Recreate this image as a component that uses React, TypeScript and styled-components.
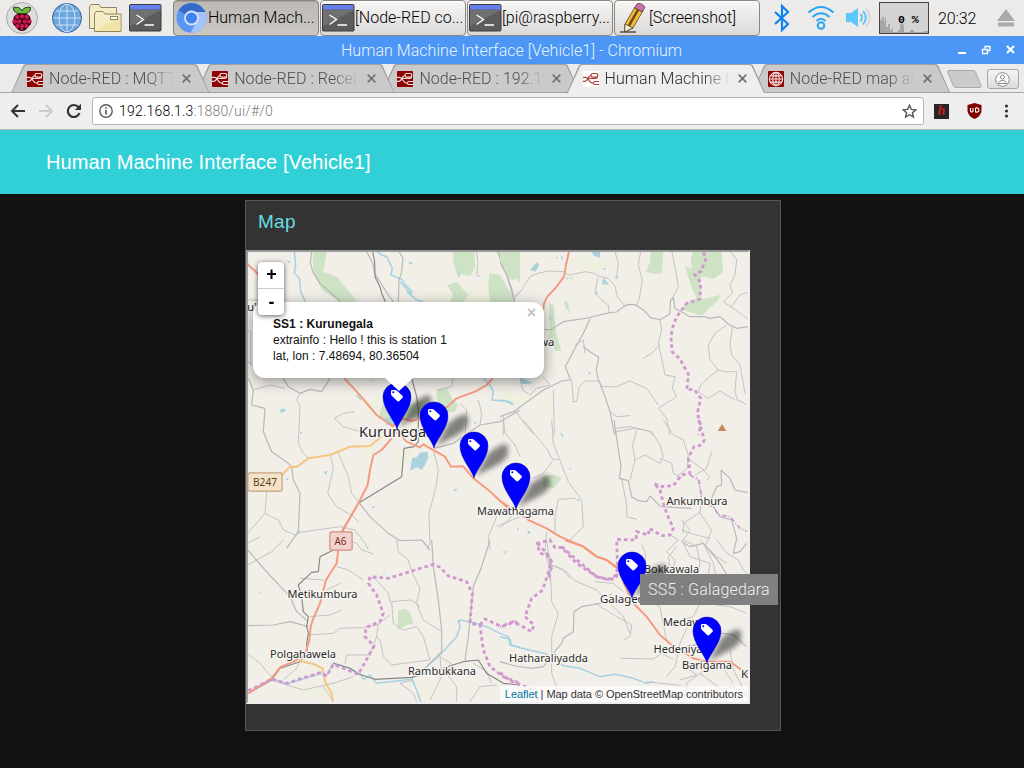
import React from 'react';
import styled, { createGlobalStyle, css } from 'styled-components';

const Global = createGlobalStyle`
  * { box-sizing: border-box; }
  body { margin: 0; background: #111; overflow: hidden; }
`;

const Desktop = styled.div`
  width: 1024px; height: 768px; display: flex; flex-direction: column;
  background: #111; overflow: hidden;
  font-family: Roboto, sans-serif; font-weight: 300; font-size: 16px; color: #000;
`;

/* ---------- desktop panel ---------- */
const Panel = styled.div`
  height: 36px; flex: none; display: flex; align-items: center; background: #edebe9;
`;
const Launchers = styled.div`
  display: flex; align-items: center; gap: 6.5px; width: 173px; padding-left: 5px;
  svg { display: block; }
  svg:first-child { margin-right: 5px; }
`;
const Tasks = styled.div`display: flex; gap: 1px; height: 36px;`;
const Task = styled.div<{ $active?: boolean }>`
  width: 146px; height: 36px; display: flex; align-items: center; padding-left: 1px;
  border: 1px solid #8a8782; border-radius: 4px; white-space: nowrap; line-height: 34px;
  background: ${p => (p.$active ? 'linear-gradient(#bcb9b5,#cbc8c4)' : 'linear-gradient(#f7f6f5,#dcdad8)')};
  box-shadow: inset 0 1px 0 ${p => (p.$active ? '#a9a6a2' : '#fff')};
  svg { flex: none; display: block; }
`;
const Tray = styled.div`
  flex: 1; display: flex; align-items: center; height: 36px;
  svg { display: block; flex: none; }
`;
const BluetoothSlot = styled.div`margin-left: 14px; width: 34px;`;
const WifiSlot = styled.div`width: 37px;`;
const SoundSlot = styled.div`width: 34px;`;
const CpuMeter = styled.div`
  position: relative; width: 50px; height: 32px; border: 1px solid #444; background: #d3d3d3;
  svg { width: 48px; height: 30px; }
`;
const CpuText = styled.span`
  position: absolute; left: 18px; top: 10px; font: bold 11.5px/14px "Liberation Mono", monospace; white-space: pre;
`;
const Clock = styled.div`width: 68px; padding-left: 9px; letter-spacing: -0.1px;`;

/* ---------- browser window ---------- */
const TitleBar = styled.div`
  height: 28px; flex: none; background: #4c97f5; color: #e9f3ff; display: flex; align-items: center;
  padding-right: 9px;
`;
const WindowTitle = styled.div`flex: 1; padding-left: 341px; line-height: 29px; white-space: nowrap; letter-spacing: .04px;`;
const TabStrip = styled.div`
  height: 29px; flex: none; display: flex; align-items: flex-end; background: #ebebeb; padding-left: 11px;
  border-bottom: 1px solid #a9a9a9;
`;
const tabShape = 'polygon(0 100%, 12.5px 1px, 14.5px 0, calc(100% - 14.5px) 0, calc(100% - 12.5px) 1px, 100% 100%)';
const Tab = styled.div<{ $active?: boolean; $z: number }>`
  position: relative; z-index: ${p => (p.$active ? 9 : p.$z)};
  width: 198.6px; height: 29px; flex: none; margin-right: -13.4px; margin-bottom: -1px;
  display: flex; align-items: center; padding: 0 18px 0 16px; color: ${p => (p.$active ? '#2d2d2d' : '#4c4c4c')};
  &::before, &::after { content: ''; position: absolute; inset: 0; clip-path: ${tabShape}; z-index: -2; background: #a0a0a0; }
  &::after { z-index: -1; ${p => p.$active ? css`inset: 1px 1.2px 0; background: #eeeeee;` : css`inset: 1px 1.2px 1px; background: #cacaca;`} }
  svg { display: block; flex: none; }
`;
const TabTitle = styled.div`
  width: 126px; margin-left: 6px; overflow: hidden; white-space: nowrap; line-height: 28px; letter-spacing: .05px;
  mask-image: linear-gradient(90deg, #000 78%, transparent 99%);
`;
const TabClose = styled.span`margin-left: 7px; display: flex; color: #727272;`;
const NewTab = styled.div`
  width: 35px; height: 18px; margin: 0 5px 4px 9.5px; position: relative; flex: none; z-index: 1;
  svg { display: block; }
`;
const UserButton = styled.div`
  width: 32px; height: 20px; margin-bottom: 3px; border: 1px solid #a5a5a5; border-radius: 3px;
  background: linear-gradient(#f4f4f4,#dcdcdc); display: flex; align-items: center; justify-content: center;
`;
const Toolbar = styled.div`
  height: 37px; flex: none; display: flex; align-items: center; background: #eeeeee; border-bottom: 1px solid #b9b9b9;
  padding-left: 10px;
  svg { display: block; flex: none; }
`;
const NavButtons = styled.div`display: flex; flex: none; gap: 12px; width: 82px;`;
const Omnibox = styled.div`
  width: 832px; height: 28px; flex: none; background: #fff; border: 1px solid #b4b4b4; border-radius: 3px;
  display: flex; align-items: center; padding: 0 6px; font-size: 14px; letter-spacing: .15px;
`;
const Address = styled.div`flex: 1; padding-left: 6px; color: #7c7c7c; b { font-weight: 300; color: #000; letter-spacing: .22px; }`;
const Extensions = styled.div`display: flex; flex: none; align-items: center; padding-left: 10px;`;
const HExt = styled.div`
  width: 15px; height: 15px; background: #262626; color: #c51e1e; text-align: center;
  font: italic bold 14px/14px "Liberation Serif", serif; margin-right: 18px;
`;

/* ---------- dashboard ---------- */
const Header = styled.div`
  height: 64px; flex: none; background: #31d0d6; color: #fff; padding-left: 46px;
  font: 400 20px/64px "Liberation Sans", sans-serif; letter-spacing: .1px;
`;
const Content = styled.div`flex: 1; background: #111; padding: 6px 0 0 245px;`;
const Card = styled.div`
  width: 536px; height: 531px; background: #333; border: 1px solid #555; display: flex; flex-direction: column;
`;
const CardTitle = styled.div`
  height: 49px; padding: 9px 12px 0; color: #66dde2;
  font: 400 19px/24px "Liberation Sans", sans-serif; letter-spacing: .25px;
`;
const MapFrame = styled.div`
  position: relative; width: 504px; height: 454px; border: 2px solid; border-color: #9a9a9a #eee #eee #9a9a9a;
  background: #f2efe9;
`;
const Viewport = styled.div`position: relative; width: 500px; height: 450px; overflow: hidden; > svg { display: block; }`;
const Popup = styled.div`
  position: absolute; left: 5px; top: 50px; width: 291px; height: 76px; background: #fff; border-radius: 12px;
  box-shadow: 0 3px 14px rgba(0,0,0,.42); padding: 14px 20px; color: #111;
  font: 400 12px/16px "Liberation Sans", sans-serif; letter-spacing: .03px;
`;
const PopupTail = styled.div`
  position: absolute; left: 132px; top: 76px; width: 28px; height: 13px; background: #fff;
  clip-path: polygon(0 0, 100% 0, 50% 100%);
`;
const PopupClose = styled.span`
  position: absolute; right: 8px; top: 3px; color: #c3c3c3; font: bold 16px/16px "Liberation Sans", sans-serif;
`;
const ZoomControl = styled.div`
  position: absolute; left: 10px; top: 10px; width: 26px; border-radius: 4px; overflow: hidden;
  background: #fff; filter: drop-shadow(0 1px 2.5px rgba(0,0,0,.65));
`;
const ZoomButton = styled.div`
  height: 26px; text-align: center; font: bold 18px/24px "Liberation Sans", sans-serif; padding-left: 1px;
  & + & { height: 27px; border-top: 1px solid #ccc; line-height: 26px; }
`;
const Attribution = styled.div`
  position: absolute; right: 0; bottom: 0; height: 16px; padding: 0 5px; background: rgba(255,255,255,.7); color: #333;
  font: 400 11px/16px "Liberation Sans", sans-serif; white-space: nowrap; letter-spacing: -.045px;
  span { color: #0078a8; }
`;
const Tooltip = styled.div`
  position: absolute; left: 392px; top: 322px; width: 138px; height: 31px; background: #808080; color: #f0f0f0;
  padding-left: 8px; font: 300 16px/31px Roboto, sans-serif; white-space: nowrap; letter-spacing: .17px;
`;

/* ---------- icons ---------- */
const berries = [[12.2, 16], [21.8, 16], [17, 15.5], [9.8, 20.5], [24.2, 20.5], [14.2, 20.5], [19.8, 20.5], [12.5, 25], [21.5, 25], [17, 25], [17, 28]];
const RaspberryIcon = () => (
  <svg width="34" height="34" viewBox="0 0 34 34">
    <circle cx="17" cy="17" r="15.5" fill="#dedddd" stroke="#a9a9a9" />
    <path d="M17 13C11 13 8 10 8.500 6.500C13 5.500 16 7.500 17 10C18 7.500 21 5.500 25.500 6.500C26 10 23 13 17 13Z" fill="#6cbb3c" stroke="#20350e" strokeWidth="1" />
    <path d="M17 12.500C11 12 8.500 15 8.500 18C6.500 21 8 24 10.500 25.500C12 28.500 15 30 17 30C19 30 22 28.500 23.500 25.500C26 24 27.500 21 25.500 18C25.500 15 23 12 17 12.500Z" fill="#2a0510" />
    {berries.map(([x, y], i) => <circle key={i} cx={x} cy={y} r={i > 9 ? 1.4 : 2.2} fill="#c9164c" />)}
  </svg>
);
const GlobeIcon = () => (
  <svg width="32" height="34" viewBox="0 0 32 34" fill="none" stroke="#c9e2fa">
    <circle cx="16" cy="17" r="14.500" fill="#6da5dd" stroke="#32639b" />
    <path d="M16 3V31M2 17H30M4.500 10H27.500M4.500 24H27.500" />
    <ellipse cx="16" cy="17" rx="8" ry="14" />
  </svg>
);
const FolderIcon = () => (
  <svg width="33" height="34" viewBox="0 0 33 34" fill="#f5ebc4" stroke="#8f8560">
    <path d="M.5 27.500V6L2 3.500H10L12 6.500H27.500V27.500Z" /><path d="M5.500 30.500V13L7 10.500H14L16 13H32V30.500Z" />
    <path d="M6 30L31.500 14V30Z" fill="#f1e09e" stroke="none" opacity=".7" />
    <rect x="21.500" y="15.500" width="7" height="3" fill="#fff" />
  </svg>
);
const TerminalIcon = () => (
  <svg width="33" height="28" viewBox="0 0 33 28">
    <rect x=".5" y=".5" width="31.500" height="26.500" rx="1" fill="#5c5c5c" stroke="#3b3b3b" />
    <path d="M1 6H32L1 22Z" fill="#707070" /><rect x="1" y="1" width="30.500" height="4.500" fill="#647fee" />
    <path d="M7.500 11L14.500 15.500L7.500 20.500M15.500 21H25" fill="none" stroke="#fff" strokeWidth="1.400" />
  </svg>
);
const ChromiumIcon = () => (
  <svg width="33" height="32" viewBox="0 0 32 32">
    <circle cx="16" cy="16" r="15" fill="#5a95f2" />
    <path d="M16 16L3 8.500A15 15 0 0 1 29 8.500L30 10H16Z" fill="#356ac9" />
    <path d="M16 10H29.800A15 15 0 0 1 15 31L21 20Z" fill="#a4c3fb" />
    <circle cx="16" cy="16" r="7.500" fill="#d7e6ff" /><circle cx="16" cy="16" r="5.600" fill="#3f84ed" />
  </svg>
);
const PencilIcon = () => (
  <svg width="33" height="32" viewBox="0 0 33 32" stroke="#3b301c" strokeWidth=".7">
    <path d="M4 30H20" strokeWidth="1.200" />
    <path d="M9 22L19 5L26.500 9.500L17 26L8.500 30Z" fill="#f2b836" /><path d="M13 23.500L22.500 7" stroke="#684713" strokeWidth="2.500" />
    <path d="M9 22L17 26L8.500 30Z" fill="#f5ead2" /><path d="M18.500 6L21 2Q25 0 29 5L26.500 9.800Z" fill="#ce70a8" />
  </svg>
);
const BluetoothIcon = () => (
  <svg width="16" height="28" viewBox="0 0 16 28" fill="none" stroke="#0a84f0" strokeWidth="2.200"><path d="M1 8L14 20L8 26V2L14 8L1 20" /></svg>
);
const WifiIcon = () => (
  <svg width="27" height="26" viewBox="0 0 27 26" fill="none" stroke="#26a7f3" strokeWidth="2">
    <path d="M.5 7.500Q13-3.500 25.500 7.500M4.500 12Q13 4.500 21.500 12M8.500 16Q13 11.500 17.500 16" /><circle cx="13" cy="20.500" r="3.300" />
  </svg>
);
const SpeakerIcon = () => (
  <svg width="27" height="22" viewBox="0 0 27 22" fill="none">
    <path d="M1 6H6L13 1V20L6 15H1Z" fill="#5cc7fa" />
    <path d="M15.500 7Q18.500 10.500 15.500 14.500M18 4Q23.500 10.500 18 17.500" stroke="#5cc7fa" strokeWidth="2" />
    <path d="M21 1.500Q28.500 10.500 21 20" stroke="#d5d8da" strokeWidth="2" />
  </svg>
);
const NodeRedIcon = ({ light, globe }: { light?: boolean; globe?: boolean }) => {
  const c = light ? '#b13b38' : '#f3dede';
  return (
    <svg width="16" height="16" viewBox="0 0 16 16" fill="none" stroke={c} strokeWidth="1.200">
      <rect width="16" height="16" rx="1" fill={light ? '#fff' : '#8f0000'} stroke="none" />
      {globe
        ? <><circle cx="8" cy="8" r="6.600" /><ellipse cx="8" cy="8" rx="3.200" ry="6.600" /><path d="M8 1.500V14.500M1.500 8H14.500M2.500 4.800H13.500M2.500 11.200H13.500" /></>
        : <><path d="M0 6.300H2.500Q4 6.300 5 8Q7.500 12.300 10.500 12.300M0 10.300H2C5 10.300 5 4.500 8 4.500M5 7.500H12.500Q14 7.500 14.500 6" /><rect x="8" y="2.500" width="6.800" height="3.600" rx="1.600" /><path d="M16 10.500H11.800Q10.500 10.500 10.500 12T11.800 13.500H16" /></>}
    </svg>
  );
};
const CrossIcon = () => <svg width="9" height="9" viewBox="0 0 9 9" stroke="currentColor" strokeWidth="1.700"><path d="M.7.7L8.300 8.300M8.300.7L.7 8.300" /></svg>;

/* ---------- map drawing: each sheet is surveyed at three units per pixel ---------- */
const Sheet = ({ x, y, children }: { x: number; y: number; children: React.ReactNode }) => (
  <g transform={`translate(${x} ${y}) scale(.33333)`}>{children}</g>
);
const S: Record<string, React.SVGProps<SVGPathElement>> = {
  wood: { fill: '#cde3c4', stroke: 'none' },
  farm: { fill: '#eff0dc', stroke: 'none', opacity: 0.75 },
  lake: { fill: '#a9d3df', stroke: 'none' },
  river: { stroke: '#a5d2e2', strokeWidth: 4.5 },
  road: { stroke: '#b9b9b9', strokeWidth: 3.6 },
  lane: { stroke: '#c0c0be', strokeWidth: 2.8 },
  rail: { stroke: '#868686', strokeWidth: 3.4 },
  trunk: { stroke: '#f59b80', strokeWidth: 6 },
  second: { stroke: '#f5c581', strokeWidth: 6 },
  border: { stroke: '#d197cf', strokeWidth: 8.5, strokeDasharray: '11 9', strokeLinejoin: 'miter' },
};
const P = ({ k, d }: { k: string; d: string }) => <path {...S[k]} d={d} />;

const Terrain = () => (
  <g fill="none" strokeLinejoin="round" strokeLinecap="butt">
    <Sheet x={240} y={195}>
      <P k="farm" d="M555 290L600 280L650 305L690 280L740 260L755 320H560ZM465 220L500 225L505 245L475 238ZM700 190L715 210L710 245L700 235Z" />
      <P k="wood" d="M218 171H260L250 230L290 245L352 320H300L245 285L220 230ZM640 171H702L706 215L690 243L650 235L640 200ZM622 270L650 262L686 300L670 321H630L640 300ZM748 235L780 240L815 300L808 321H750L745 275ZM766 171H840V262L818 240L815 205L780 185Z" />
      <P k="lake" d="M505 200L520 203L510 210ZM648 222L662 243L655 245ZM140 195L155 200L145 204Z" />
      <P k="river" d="M163 171L167 210L163 235L178 250L182 290L196 320M405 165L425 180L440 185L457 220L453 240L485 253L496 270L516 289L513 296L480 260M500 290L530 315L550 320" />
      <P k="road" d="M215 171L211 200L218 230L240 265L280 300L300 320M381 171L398 205L404 235L445 300L460 320M478 171L489 190L484 235L477 255L475 320M775 171L785 210L800 240L815 290L824 320" />
      <P k="rail" d="M398 171L404 200L405 245L420 275L425 295L436 320" />
      <P k="lane" d="M709 171L714 200L710 240L722 246M815 310L840 290" />
      <P k="trunk" d="M22 207L60 242" />
      <P k="lane" d="M23 315H60M24 408L32 410V510M23 500L55 520" />
    </Sheet>
    <Sheet x={500} y={245}>
      <P k="farm" d="M55 20L95 38L80 45ZM85 55L118 70L105 80ZM200 45L240 30L330 60L285 80L240 75ZM220 105L245 110L230 130ZM285 105L300 125L285 145ZM0 430L60 450L90 455L60 485L40 470L0 475ZM115 455L160 470L155 490L120 475Z" />
      <P k="wood" d="M0 20H55L54 90L45 104L27 103L0 50ZM0 115L35 150L40 171H0ZM452 20H490L486 85L465 87L438 80L450 50ZM580 20H665L669 82L640 101L605 94L600 120L604 162L630 158L661 149L655 165L605 212L550 195L550 180L590 160L572 120L555 63L575 70L572 40ZM147 174L160 180L168 260L184 317L168 318L144 285L150 240ZM192 165L203 170L210 202L197 190Z" />
      <P k="lake" d="M90 75L110 51L118 60L106 80ZM274 20H300V38L282 32ZM311 98L328 120L305 117ZM341 95H356L350 103ZM60 395L100 415L65 418ZM146 212L156 218L150 230ZM168 33L174 40L168 42ZM212 95L217 100L212 104ZM200 97H205V103H200ZM288 140H293V148H288ZM310 68L320 70L312 76ZM184 32H188V45H184ZM265 382H271V388H265ZM180 565H188L185 572Z" />
      <P k="river" d="M0 465L28 470L40 480" />
      <P k="trunk" d="M207 20L198 60L192 95L170 125L142 155L132 175L130 195" />
      <P k="road" d="M0 50L20 90L35 130L44 171M133 253L150 255L190 230L270 218L285 213L330 203L350 201L372 184L385 178L406 179L430 195L452 218L480 224L509 208L512 165L520 158L525 190L570 215L612 215L630 220L660 215L685 237L710 250L743 245M270 222L250 265L225 310L196 365L212 405L185 408L130 435L40 500L0 515M295 405L310 440L330 500L344 570M250 305L270 320L296 337L289 375L295 405L306 426" />
      <P k="lane" d="M44 160L65 135L90 95L120 83L150 78L190 80L208 90L255 80L282 85L300 95L325 100L345 123L352 155L372 180M345 20L355 55L350 95M422 20L415 60L427 105L418 160L410 180M515 20L525 65L535 125L515 165M293 100L285 145L305 165L325 180L327 202M692 20L710 45L705 90L690 120L697 145L670 170L692 185L715 200L743 222M692 188L720 150L743 142M480 224L485 255L475 295L484 335L495 390L525 395L517 430L530 455L475 490L500 520L510 570M480 300L455 325L430 340M680 240L645 265L625 300L630 345L655 375L675 380L710 380L705 440L712 465L740 478M655 375L605 415L595 440L625 460L660 438L705 465M697 245L690 300L695 330L720 360L735 445M225 300L250 285L255 325M215 405L220 470L230 470L238 425L255 408L295 408M300 425L350 425L390 408L440 430L475 480M330 500L350 515L390 512M345 550L390 545L445 558L460 570M160 435L163 570M45 495L80 545L105 570M10 510V570M60 400L68 435L90 450L110 430L150 420L130 395" />
      <P k="border" d="M610 22L618 40L604 78L584 88L602 113L600 162L560 175L530 215L517 250L513 275L516 320L540 342L566 390L560 434L583 434L602 460L592 505L602 540L596 570" />
      <path d="M653 558L666 537L679 558Z" fill="#cb8858" />
    </Sheet>
    <Sheet x={240} y={370}>
      <P k="farm" d="M370 100L430 70L430 120L390 140ZM470 235L520 240L510 270L480 290L455 265ZM370 225L420 230L370 270ZM340 60L380 90L360 100Z" />
      <P k="wood" d="M590 60L620 53L638 88L654 103L645 125L625 128L590 90ZM430 95L455 155L415 145ZM500 110L550 90L535 145L500 145Z" />
      <P k="lake" d="M517 263L530 262L540 248L563 245L565 262L555 285L545 300L530 292L510 302ZM118 121L128 115L140 120L125 130ZM435 145L455 140L470 165H440ZM700 157L710 155L708 165ZM250 305L263 303L258 315ZM180 185H186V190H180ZM136 326L148 324L142 332ZM642 356H650V362H642ZM170 482H179V488H170ZM397 409H403V414H397ZM396 31L403 33L397 37Z" />
      <P k="river" d="M730 25L750 45L760 65L756 90L795 93L820 103M350 75L365 90" />
      <P k="road" d="M25 25L40 60L35 105L75 115L70 185L95 245L145 280L155 290M270 25L245 65L210 58L180 70L145 50L130 25M582 235L640 220L720 165L780 155L840 120M155 290L160 330L180 370L175 485L140 535M355 395L390 440L445 490L480 512L545 510L570 540" />
      <P k="lane" d="M38 60L90 45L135 55M180 70L170 90L180 110L175 220L190 250L205 265M345 125L310 130L283 145L310 170L380 190L420 205M270 250L280 295L263 370L290 410L340 440L355 455M295 250L325 320L335 370L355 395M580 240L595 300L588 350L567 430L570 520L560 540M715 90L725 130L720 165M640 20L635 50L590 60M790 145L795 190L825 225L840 260M23 490L75 430L80 370L90 330M75 430L115 450L130 480L165 495L180 487L300 470L345 480L375 520L385 540M23 520L60 500M660 100L680 120L675 200M770 440L745 500L750 540M770 470L840 440" />
      <P k="rail" d="M515 25L530 80L535 120L535 215L522 230L492 235L485 320L355 400L305 490" />
      <P k="second" d="M122 318L150 290L170 291L205 265L270 255L300 243L330 230L390 228L425 200" />
      <P k="trunk" d="M313 25L355 70L410 135L460 170M455 205L425 240L400 255L390 300L383 345L355 400L305 485M470 185L500 215L540 232L550 223L615 260L633 290L670 289L700 325L745 360L800 410L840 425M455 170L490 145L515 153L540 145L620 112L650 85L705 65L740 45L758 25" />
    </Sheet>
    <Sheet x={500} y={420}>
      <P k="wood" d="M127 170L160 163L185 175L160 205L130 200ZM10 392L20 398L12 405Z" />
      <P k="lake" d="M182 37L192 52L186 50ZM230 238H240L235 246ZM207 143L215 147L210 150ZM83 333H90V341H83ZM51 325H56V331H51Z" />
      <P k="trunk" d="M0 243L30 262L50 273L85 300L140 325L180 350L250 380L290 410L320 420L345 440L358 445" />
      <P k="road" d="M342 0L350 55L363 140L358 175L385 182L395 230L415 242L440 245L450 228L482 260L575 265" />
      <P k="lane" d="M155 0L160 70L185 135L205 185L245 240L250 320L210 360M70 0L110 50L140 85L155 115L175 120M100 175L130 160L160 120M226 235L175 238L165 290V335M365 175L380 255L380 290L410 298M0 325L40 285M348 35L405 25L455 35L480 75L490 110L480 130L435 105L405 120L390 180M405 120L398 75L410 30M480 115L515 130L520 160L545 173M490 0L520 45L550 60L565 105L562 145L530 170M585 165L620 145L635 95M570 120L605 145L630 172L620 180M590 170L605 220L600 280L635 330L615 380L640 430L650 480M140 335L135 395L145 430L150 480M145 435L185 445L210 475M425 375L435 395L440 480M510 345L535 360L500 395L525 420L515 480M545 300L570 330L550 360L590 380L600 430L590 480M545 330L570 340L630 355M603 275L550 310L550 340" />
      <P k="road" d="M663 150L665 195L650 200L630 245L660 290L695 300L710 355L700 400L720 395L740 370M663 150L690 175L705 210L743 218M545 365L570 380L610 370L640 405L660 430L690 480" />
      <P k="border" d="M596 0L603 25L613 60L604 75L582 80L565 115L570 160L545 165L520 197L480 200L462 190L480 210L490 250L500 280L520 325L510 345L485 347L448 325L445 345L410 335L408 360L350 358L352 430L350 465L325 478L290 470L230 430L185 382L165 383L150 360L112 370L118 398L145 410L155 440L145 480" />
      <path {...S.border} strokeWidth="5" strokeDasharray="14 6 3 6" d="M570 165L598 183L605 245L640 260L655 285L690 290L720 325L740 334" />
    </Sheet>
    <Sheet x={240} y={540}>
      <P k="wood" d="M475 210L495 207L510 215L520 250L495 257L473 270ZM785 32H800V40Z" />
      <P k="farm" d="M195 450L260 440L270 470H190ZM530 450L580 455L570 475L530 470Z" />
      <P k="lake" d="M423 105L437 99L435 103ZM58 155H63V165Z" />
      <P k="river" d="M655 250L660 240L700 248L740 260L780 280L805 290L810 315L840 322M655 240L660 260L650 290L600 345L560 380L515 415M515 415L530 450L542 485M95 415L140 432L210 410L245 400L260 405L280 370L330 385L365 405L370 420L390 405L410 430L515 418" />
      <P k="road" d="M23 30L75 90L150 170L170 215L205 245M575 0L580 80L595 180L605 270L605 335L560 380M750 0L725 80L700 140L690 240L685 290L675 360M25 257L100 255L150 245L205 260" />
      <P k="lane" d="M23 75L95 35L130 0M470 0L475 35L505 60L515 95L540 145L530 190L550 240L605 275M385 115L405 115L445 160L450 185L515 180L540 200M205 285L280 280L300 265L370 263L410 255L450 225M455 185L460 250L490 270L530 260L550 290L570 360L455 375L430 350L420 300L410 290M180 115L250 120M290 80L325 90L370 120M315 0L350 10L365 30L400 42M260 150L300 130M210 230L270 225L305 210M23 340L65 375L80 395L110 425L190 450L280 430L340 410M280 485L250 440M315 370L320 345L390 345L410 290L415 250M130 420L170 385L180 360M520 420L480 430L520 460L530 485M640 375L600 350L605 410L570 480M620 400L650 440L650 485M690 485L720 440L770 435M700 370L740 395L755 430" />
      <P k="rail" d="M280 30L240 50L235 95L215 97L175 135L185 170L190 215L205 230L200 260L205 280L200 310L202 335L180 365L120 385L95 420L25 460M280 370L330 385L355 402L405 418L515 412L560 400L670 365L715 360L740 400L790 430L840 435" />
      <P k="trunk" d="M295 28L290 70L258 120L240 190L220 235L212 260L208 300L195 345L170 360L120 382L95 415L25 460" />
      <P k="second" d="M180 362L220 372L248 385L255 425L275 460L279 485" />
      <P k="border" d="M25 452L95 418L140 430L240 398L260 408L280 373L355 403L375 367L402 318L375 290L378 262L420 245L430 220L410 165L385 130L390 110L445 115L525 90L580 73L600 82L625 108L680 125L697 160L690 250L720 255L730 330L750 380L790 410L840 430M720 255L735 237L785 260L825 245L840 255" />
    </Sheet>
    <Sheet x={500} y={540}>
      <P k="river" d="M0 290L30 297L35 315L60 323L140 342L155 355L190 377L240 385L300 410L345 403L400 415L440 430L460 425" />
      <P k="road" d="M0 365L45 378L95 385L130 380L155 345L185 310L190 295L220 275L222 215L245 200L300 190L335 160M545 325L600 310L635 275L700 285L740 320" />
      <P k="lane" d="M140 0L150 75L155 185L175 220L155 290L155 400L185 485M155 75L200 95L220 120L290 150L370 230L390 280M285 190L350 230L395 255L390 290L370 300M285 125L340 130L370 155M430 160L445 180L480 200L495 280L500 300M530 20L505 50L515 100M545 0L570 50L630 70L625 100M545 140L570 150L600 190L580 230L545 240M650 0L680 40L715 60L730 90L743 100M600 0L650 50L680 70M650 195L690 200L740 220M362 355L460 357L485 340L520 358M500 410L525 380L540 310L560 265M555 485L560 430L600 400L640 430L680 460M440 425L530 435L620 460L700 440L743 470M600 400L620 380L670 385L700 430M540 420L590 405L570 390L630 385M0 400L40 425M690 330L700 390L743 470" />
      <P k="trunk" d="M195 0L250 20L290 50L320 60L353 83M370 125L385 160L405 195L440 230L480 285L515 315L580 355L620 365L690 365L725 390L745 405" />
      <P k="border" d="M112 10L145 45L155 65L128 150L95 175L75 230L102 255L95 275L40 245L0 260M0 398L30 422L90 445L115 480M185 20L225 55L290 110L330 120L350 110L355 80" />
    </Sheet>
  </g>
);

const places: [string, number, number, number, number][] = [
  ['Kurunegala', 359, 436.5, 14, 79], ['Mawathagama', 477, 514.5, 11.5, 77], ['Ankumbura', 666.5, 505, 11.5, 61],
  ['Bokkawala', 644, 572.5, 11.5, 55], ['Metikumbura', 287.5, 598, 11.5, 70], ['Polgahawela', 270, 658, 11.5, 66],
  ['Rambukkana', 408, 675, 11.5, 68], ['Hatharaliyadda', 509, 662, 11.5, 79], ['Galagedara', 600, 603, 11.5, 62],
  ['Medawala', 663, 626, 11.5, 53], ['Hedeniya', 653.5, 652.5, 11.5, 49], ['Barigama', 682, 669, 11.5, 50],
];
const Labels = () => (
  <g fontFamily="'Noto Sans', sans-serif" fontSize="11.5" fontWeight="400" fill="#2b2b2b" stroke="#f8f6f2" strokeWidth="2.500" paintOrder="stroke" strokeLinejoin="round">
    {places.map(([t, x, y, s, w]) => <text key={t} x={x} y={y} fontSize={s} textLength={w} lengthAdjust="spacingAndGlyphs">{t}</text>)}
    <text x="741" y="678">Kandy</text><text x="247" y="311">u'</text><text x="539" y="346">wa</text>
    <g stroke="none">
      <rect x="248.500" y="473.500" width="33" height="17" rx="1.500" fill="#f4e2cb" stroke="#caa377" />
      <text x="253" y="486" fontSize="11" textLength="24" lengthAdjust="spacingAndGlyphs" fill="#604417">B247</text>
      <rect x="330.500" y="532.500" width="21" height="17" rx="1.500" fill="#f2d2cc" stroke="#d18f81" />
      <text x="334.500" y="545" fontSize="11" textLength="12" lengthAdjust="spacingAndGlyphs" fill="#7b2918">A6</text>
    </g>
  </g>
);

const pins = [[397, 429], [434, 448], [474, 478], [516, 509], [632, 598], [707, 663]];
const Pins = () => (
  <g>
    {pins.map(([x, y]) => (
      <path key={x} transform={`translate(${x} ${y})`} d="M2-2L14-24Q24-33 32-34Q36-29 33-21Q27-14 17-10Z" fill="#000" opacity=".46" filter="url(#soft)" />
    ))}
    {pins.map(([x, y]) => (
      <g key={x} transform={`translate(${x} ${y})`}>
        <path d="M0 0C-2-8-14-20-14-32A14 14 0 0 1 14-32C14-20 2-8 0 0Z" fill="#00f" stroke="#0000a8" strokeWidth=".5" />
        <path transform="translate(-6 -39)" fillRule="evenodd" fill="#fff" d="M0 1.200Q0 0 1.200 0H4.200Q5.200 0 6 .7L11.500 5.800Q12.400 6.800 11.500 7.700L8 11.200Q7.100 12 6.200 11.100L.8 5.700Q0 5 0 4ZM2.300 1.300A1 1 0 1 0 2.300 3.300A1 1 0 1 0 2.300 1.300Z" />
      </g>
    ))}
  </g>
);

const tabs = ['Node-RED : MQTT B', 'Node-RED : Receive', 'Node-RED : 192.168', 'Human Machine Int', 'Node-RED map and'];

export default function App() {
  return (
    <Desktop>
      <Global />
      <Panel>
        <Launchers><RaspberryIcon /><GlobeIcon /><FolderIcon /><TerminalIcon /></Launchers>
        <Tasks>
          <Task $active><ChromiumIcon />Human Mach...</Task>
          <Task><TerminalIcon />[Node-RED co...</Task>
          <Task><TerminalIcon />[pi@raspberry...</Task>
          <Task><PencilIcon />[Screenshot]</Task>
        </Tasks>
        <Tray>
          <BluetoothSlot><BluetoothIcon /></BluetoothSlot>
          <WifiSlot><WifiIcon /></WifiSlot>
          <SoundSlot><SpeakerIcon /></SoundSlot>
          <CpuMeter>
            <svg viewBox="0 0 48 30" fill="#a6a6a6"><path d="M0 30V16L2 18V14H4V20L6 13V24H8V21H10V28L13 25V29H18V27H20V22L22 19L24 23V29H30V27H34V29H44V28H48V30Z" /></svg>
            <CpuText>0 %</CpuText>
          </CpuMeter>
          <Clock>20:32</Clock>
          <svg width="18" height="18" viewBox="0 0 18 18" fill="#aaa"><path d="M9 0L18 12H0ZM1 13.500H17V17.500H1Z" /></svg>
        </Tray>
      </Panel>
      <TitleBar>
        <WindowTitle>Human Machine Interface [Vehicle1] - Chromium</WindowTitle>
        <svg width="58" height="10" viewBox="0 0 58 10" fill="none" stroke="#fff" strokeWidth="2">
          <path d="M1 8H9M50 1L57 8M57 1L50 8" /><path d="M28 3.500V1.500H33V5.500H31M25.500 4.500H30.500V8.500H25.500Z" strokeWidth="1.300" />
        </svg>
      </TitleBar>
      <TabStrip>
        {tabs.map((t, i) => (
          <Tab key={t} $active={i === 3} $z={6 - i}>
            <NodeRedIcon light={i === 3} globe={i === 4} /><TabTitle>{t}</TabTitle><TabClose><CrossIcon /></TabClose>
          </Tab>
        ))}
        <NewTab><svg width="35" height="18" viewBox="0 0 35 18"><path d="M2 .5H26Q28 .5 29 3L34 16Q34 17.500 33 17.500H9Q7 17.500 6 15L.6 2Q.5.500 2 .5Z" fill="#cbcbcb" stroke="#a9a9a9" /></svg></NewTab>
        <UserButton>
          <svg width="15" height="15" viewBox="0 0 15 15" fill="none" stroke="#888"><circle cx="7.500" cy="7.500" r="6.800" fill="#fff" /><circle cx="7.500" cy="5" r="2" /><path d="M3.500 11.500C3.500 7.500 11.500 7.500 11.500 11.500Z" /></svg>
        </UserButton>
      </TabStrip>
      <Toolbar>
        <NavButtons>
          <svg width="16" height="16" viewBox="0 0 16 16" fill="none" stroke="#333" strokeWidth="2"><path d="M15 8H2.500M8 2L2 8L8 14" /></svg>
          <svg width="16" height="16" viewBox="0 0 16 16" fill="none" stroke="#ccc" strokeWidth="2"><path d="M1 8H13.500M8 2L14 8L8 14" /></svg>
          <svg width="16" height="16" viewBox="0 0 16 16" fill="none" stroke="#333" strokeWidth="2.200"><path d="M13.500 10A6 6 0 1 1 12.500 4.200" /><path d="M15 .8V7H8.800Z" fill="#333" stroke="none" /></svg>
        </NavButtons>
        <Omnibox>
          <svg width="14" height="14" viewBox="0 0 14 14" fill="none" stroke="#5a5a5a" strokeWidth="1.400"><circle cx="7" cy="7" r="6.200" /><path d="M7 6V10.500M7 3.300V4.800" strokeWidth="1.700" /></svg>
          <Address><b>192.168.1.3</b>:1880/ui/#/0</Address>
          <svg width="15" height="15" viewBox="0 0 15 15" fill="none" stroke="#555" strokeWidth="1.400"><path d="M7.500 1.300L9.300 5.400L13.800 5.800L10.400 8.700L11.400 13L7.500 10.700L3.600 13L4.600 8.700L1.200 5.800L5.700 5.400Z" /></svg>
        </Omnibox>
        <Extensions>
          <HExt>h</HExt>
          <svg width="15" height="16" viewBox="0 0 15 16"><path d="M7.500 0L14.500 2V8Q14 13 7.500 16Q1 13 .5 8V2Z" fill="#800000" /><path d="M3.500 5V8Q3.500 9 4.700 9Q6 9 6 8V5M8.500 5V9Q12 9.500 12 7Q12 4.500 8.500 5" fill="none" stroke="#fff" strokeWidth="1.100" /></svg>
          <svg width="42" height="16" viewBox="0 0 42 16" fill="#333"><circle cx="24.500" cy="3" r="1.600" /><circle cx="24.500" cy="8" r="1.600" /><circle cx="24.500" cy="13" r="1.600" /></svg>
        </Extensions>
      </Toolbar>
      <Header>Human Machine Interface [Vehicle1]</Header>
      <Content>
        <Card>
          <CardTitle>Map</CardTitle>
          <MapFrame>
            <Viewport>
              <svg width="500" height="450" viewBox="248 252 500 450">
                <defs><filter id="soft" x="-30%" y="-30%" width="160%" height="160%"><feGaussianBlur stdDeviation="2.900" /></filter></defs>
                <rect x="248" y="252" width="500" height="450" fill="#f2efe9" />
                <Terrain /><Labels /><Pins />
              </svg>
              <Popup>
                <b>SS1 : Kurunegala</b><br />extrainfo : Hello ! this is station 1<br />lat, lon : 7.48694, 80.36504
                <PopupTail /><PopupClose>×</PopupClose>
              </Popup>
              <ZoomControl><ZoomButton>+</ZoomButton><ZoomButton>-</ZoomButton></ZoomControl>
              <Attribution><span>Leaflet</span> | Map data © OpenStreetMap contributors</Attribution>
            </Viewport>
            <Tooltip>SS5 : Galagedara</Tooltip>
          </MapFrame>
        </Card>
      </Content>
    </Desktop>
  );
}
